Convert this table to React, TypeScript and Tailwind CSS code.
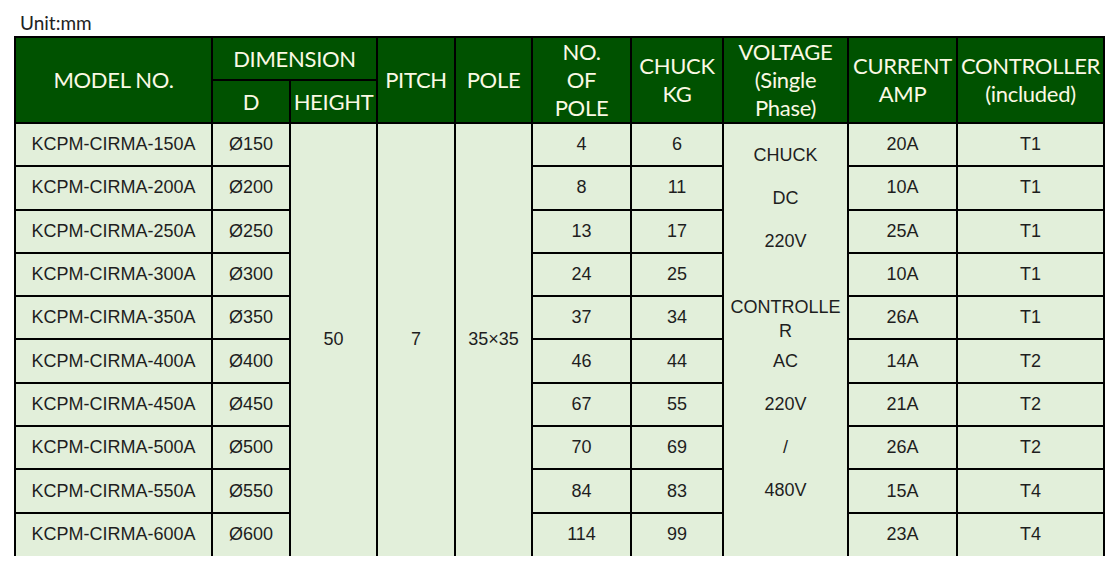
// Spec table: magnetic chuck models, Excel-style green header
const rows = [
  ["KCPM-CIRMA-150A", "Ø150", "4", "6", "20A", "T1"],
  ["KCPM-CIRMA-200A", "Ø200", "8", "11", "10A", "T1"],
  ["KCPM-CIRMA-250A", "Ø250", "13", "17", "25A", "T1"],
  ["KCPM-CIRMA-300A", "Ø300", "24", "25", "10A", "T1"],
  ["KCPM-CIRMA-350A", "Ø350", "37", "34", "26A", "T1"],
  ["KCPM-CIRMA-400A", "Ø400", "46", "44", "14A", "T2"],
  ["KCPM-CIRMA-450A", "Ø450", "67", "55", "21A", "T2"],
  ["KCPM-CIRMA-500A", "Ø500", "70", "69", "26A", "T2"],
  ["KCPM-CIRMA-550A", "Ø550", "84", "83", "15A", "T4"],
  ["KCPM-CIRMA-600A", "Ø600", "114", "99", "23A", "T4"],
];

const th =
  "border-2 border-black bg-[#005200] text-[#fbf9e4] font-normal text-center align-middle p-0";
const td = "border-2 border-black bg-[#e2efda] text-center align-middle p-0";

export default function App() {
  const last = rows.length - 1;
  return (
    <div className="h-[566px] w-[1116px] overflow-hidden bg-white">
      <div className="h-[36px] pl-[20px] pt-[13px] font-['Lato',sans-serif] text-[19px] leading-[20px] text-[#222]">
        Unit:mm
      </div>
      <table className="ml-[14px] table-fixed border-collapse" style={{ width: 1089 }}>
        <colgroup>
          <col className="w-[197px]" />
          <col className="w-[78px]" />
          <col className="w-[87px]" />
          <col className="w-[78px]" />
          <col className="w-[77px]" />
          <col className="w-[99px]" />
          <col className="w-[92px]" />
          <col className="w-[125px]" />
          <col className="w-[109px]" />
          <col className="w-[147px]" />
        </colgroup>
        <thead className="font-['Lato',sans-serif] text-[22px] leading-[28px] tracking-[-0.3px]">
          <tr className="h-[43px]">
            <th rowSpan={2} className={th}>MODEL NO.</th>
            <th colSpan={2} className={th}>DIMENSION</th>
            <th rowSpan={2} className={th}>PITCH</th>
            <th rowSpan={2} className={th}>POLE</th>
            <th rowSpan={2} className={th}>
              NO.<br />OF<br />POLE
            </th>
            <th rowSpan={2} className={th}>
              CHUCK<br />KG
            </th>
            <th rowSpan={2} className={th}>
              VOLTAGE<br />(Single<br />Phase)
            </th>
            <th rowSpan={2} className={th}>
              CURRENT<br />AMP
            </th>
            <th rowSpan={2} className={th}>
              CONTROLLER<br />(included)
            </th>
          </tr>
          <tr className="h-[43px]">
            <th className={th}>D</th>
            <th className={th}>HEIGHT</th>
          </tr>
        </thead>
        <tbody className="font-['Liberation_Sans',Arial,sans-serif] text-[18px] text-[#1e1e1e]">
          {rows.map((r, i) => {
            const b = i === last ? " border-b-0" : "";
            return (
              <tr key={r[0]} className="h-[43.3px]">
                <td className={td + b}>{r[0]}</td>
                <td className={td + b}>{r[1]}</td>
                {i === 0 && (
                  <>
                    <td rowSpan={10} className={td + " border-b-0"}>50</td>
                    <td rowSpan={10} className={td + " border-b-0"}>7</td>
                    <td rowSpan={10} className={td + " border-b-0"}>35×35</td>
                  </>
                )}
                <td className={td + b}>{r[2]}</td>
                <td className={td + b}>{r[3]}</td>
                {i === 0 && (
                  <td rowSpan={10} className={td + " border-b-0 align-top"}>
                    <div className="flex flex-col items-center pt-[10px]">
                      <div className="flex h-[43px] items-center">CHUCK</div>
                      <div className="flex h-[43px] items-center">DC</div>
                      <div className="flex h-[43px] items-center">220V</div>
                      <div className="mt-[32px] leading-[24px]">
                        CONTROLLE<br />R
                      </div>
                      <div className="-mt-[3px] flex h-[43px] items-center">AC</div>
                      <div className="flex h-[43px] items-center">220V</div>
                      <div className="flex h-[43px] items-center">/</div>
                      <div className="flex h-[43px] items-center">480V</div>
                    </div>
                  </td>
                )}
                <td className={td + b}>{r[4]}</td>
                <td className={td + b}>{r[5]}</td>
              </tr>
            );
          })}
        </tbody>
      </table>
    </div>
  );
}
